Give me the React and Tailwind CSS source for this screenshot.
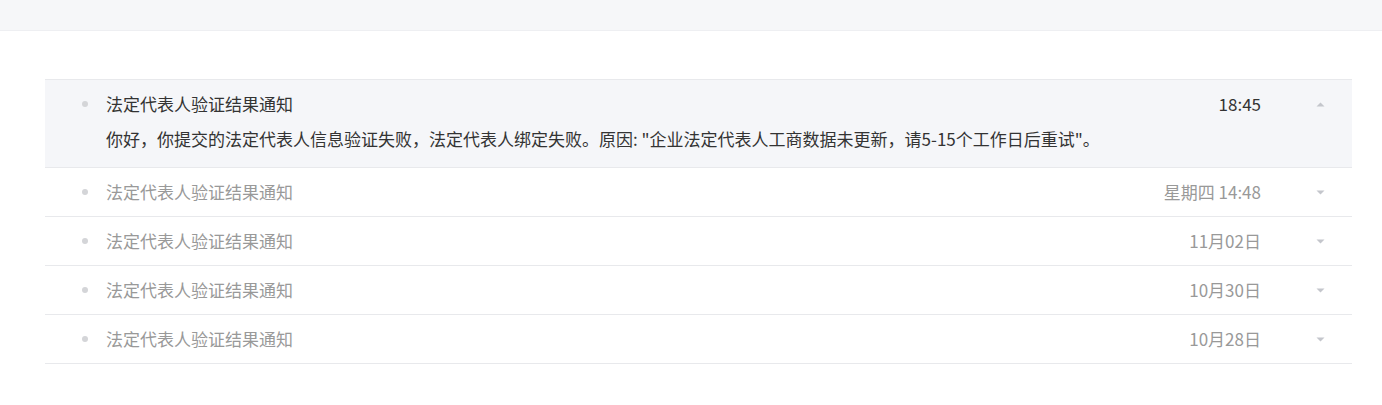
import { useState } from "react";

const items = [
  {
    id: 1,
    title: "法定代表人验证结果通知",
    time: "18:45",
    content:
      '你好，你提交的法定代表人信息验证失败，法定代表人绑定失败。原因: "企业法定代表人工商数据未更新，请5-15个工作日后重试"。',
  },
  { id: 2, title: "法定代表人验证结果通知", time: "星期四 14:48", content: "" },
  { id: 3, title: "法定代表人验证结果通知", time: "11月02日", content: "" },
  { id: 4, title: "法定代表人验证结果通知", time: "10月30日", content: "" },
  { id: 5, title: "法定代表人验证结果通知", time: "10月28日", content: "" },
];

const Caret = ({ up }) => (
  <svg width="9" height="5" viewBox="0 0 9 5" className={up ? "rotate-180" : ""}>
    <path d="M0.5 0.5h8L4.5 4.5z" fill="#c4c6cc" />
  </svg>
);

const MessageRow = ({ item, open, onToggle }) => {
  return (
    <div
      className={`border-b border-[#e8e9ec] cursor-pointer ${open ? "bg-[#f5f6f9]" : "bg-white"}`}
      onClick={onToggle}
    >
      <div className="flex items-center h-12 pl-[37px]">
        <span className="w-[6px] h-[6px] rounded-full bg-[#d4d5d8] shrink-0" />
        <span
          className={`ml-[18px] flex-1 text-[17px] ${open ? "text-[#333]" : "text-[#999]"}`}
        >
          {item.title}
        </span>
        <span className={`mr-[27px] text-[17px] ${open ? "text-[#333]" : "text-[#999]"}`}>
          {item.time}
        </span>
        <span className="w-[64px] flex justify-center">
          <Caret up={open} />
        </span>
      </div>
      {open && item.content && (
        <p className="pl-[61px] pr-[91px] pb-[16px] -mt-[1px] text-[17px] leading-6 text-[#333]">
          {item.content}
        </p>
      )}
    </div>
  );
};

export default function App() {
  const [openId, setOpenId] = useState(1);
  return (
    <div
      className="min-h-[405px] bg-white"
      style={{ fontFamily: '"Noto Sans CJK SC", "Noto Sans", sans-serif' }}
    >
      <div className="h-[31px] bg-[#f6f7f9] border-b border-[#eeeff2]" />
      <div className="ml-[45px] mr-[30px] mt-[48px] border-t border-[#e8e9ec]">
        {items.map((item) => (
          <MessageRow
            key={item.id}
            item={item}
            open={openId === item.id}
            onToggle={() => setOpenId(openId === item.id ? null : item.id)}
          />
        ))}
      </div>
    </div>
  );
}
